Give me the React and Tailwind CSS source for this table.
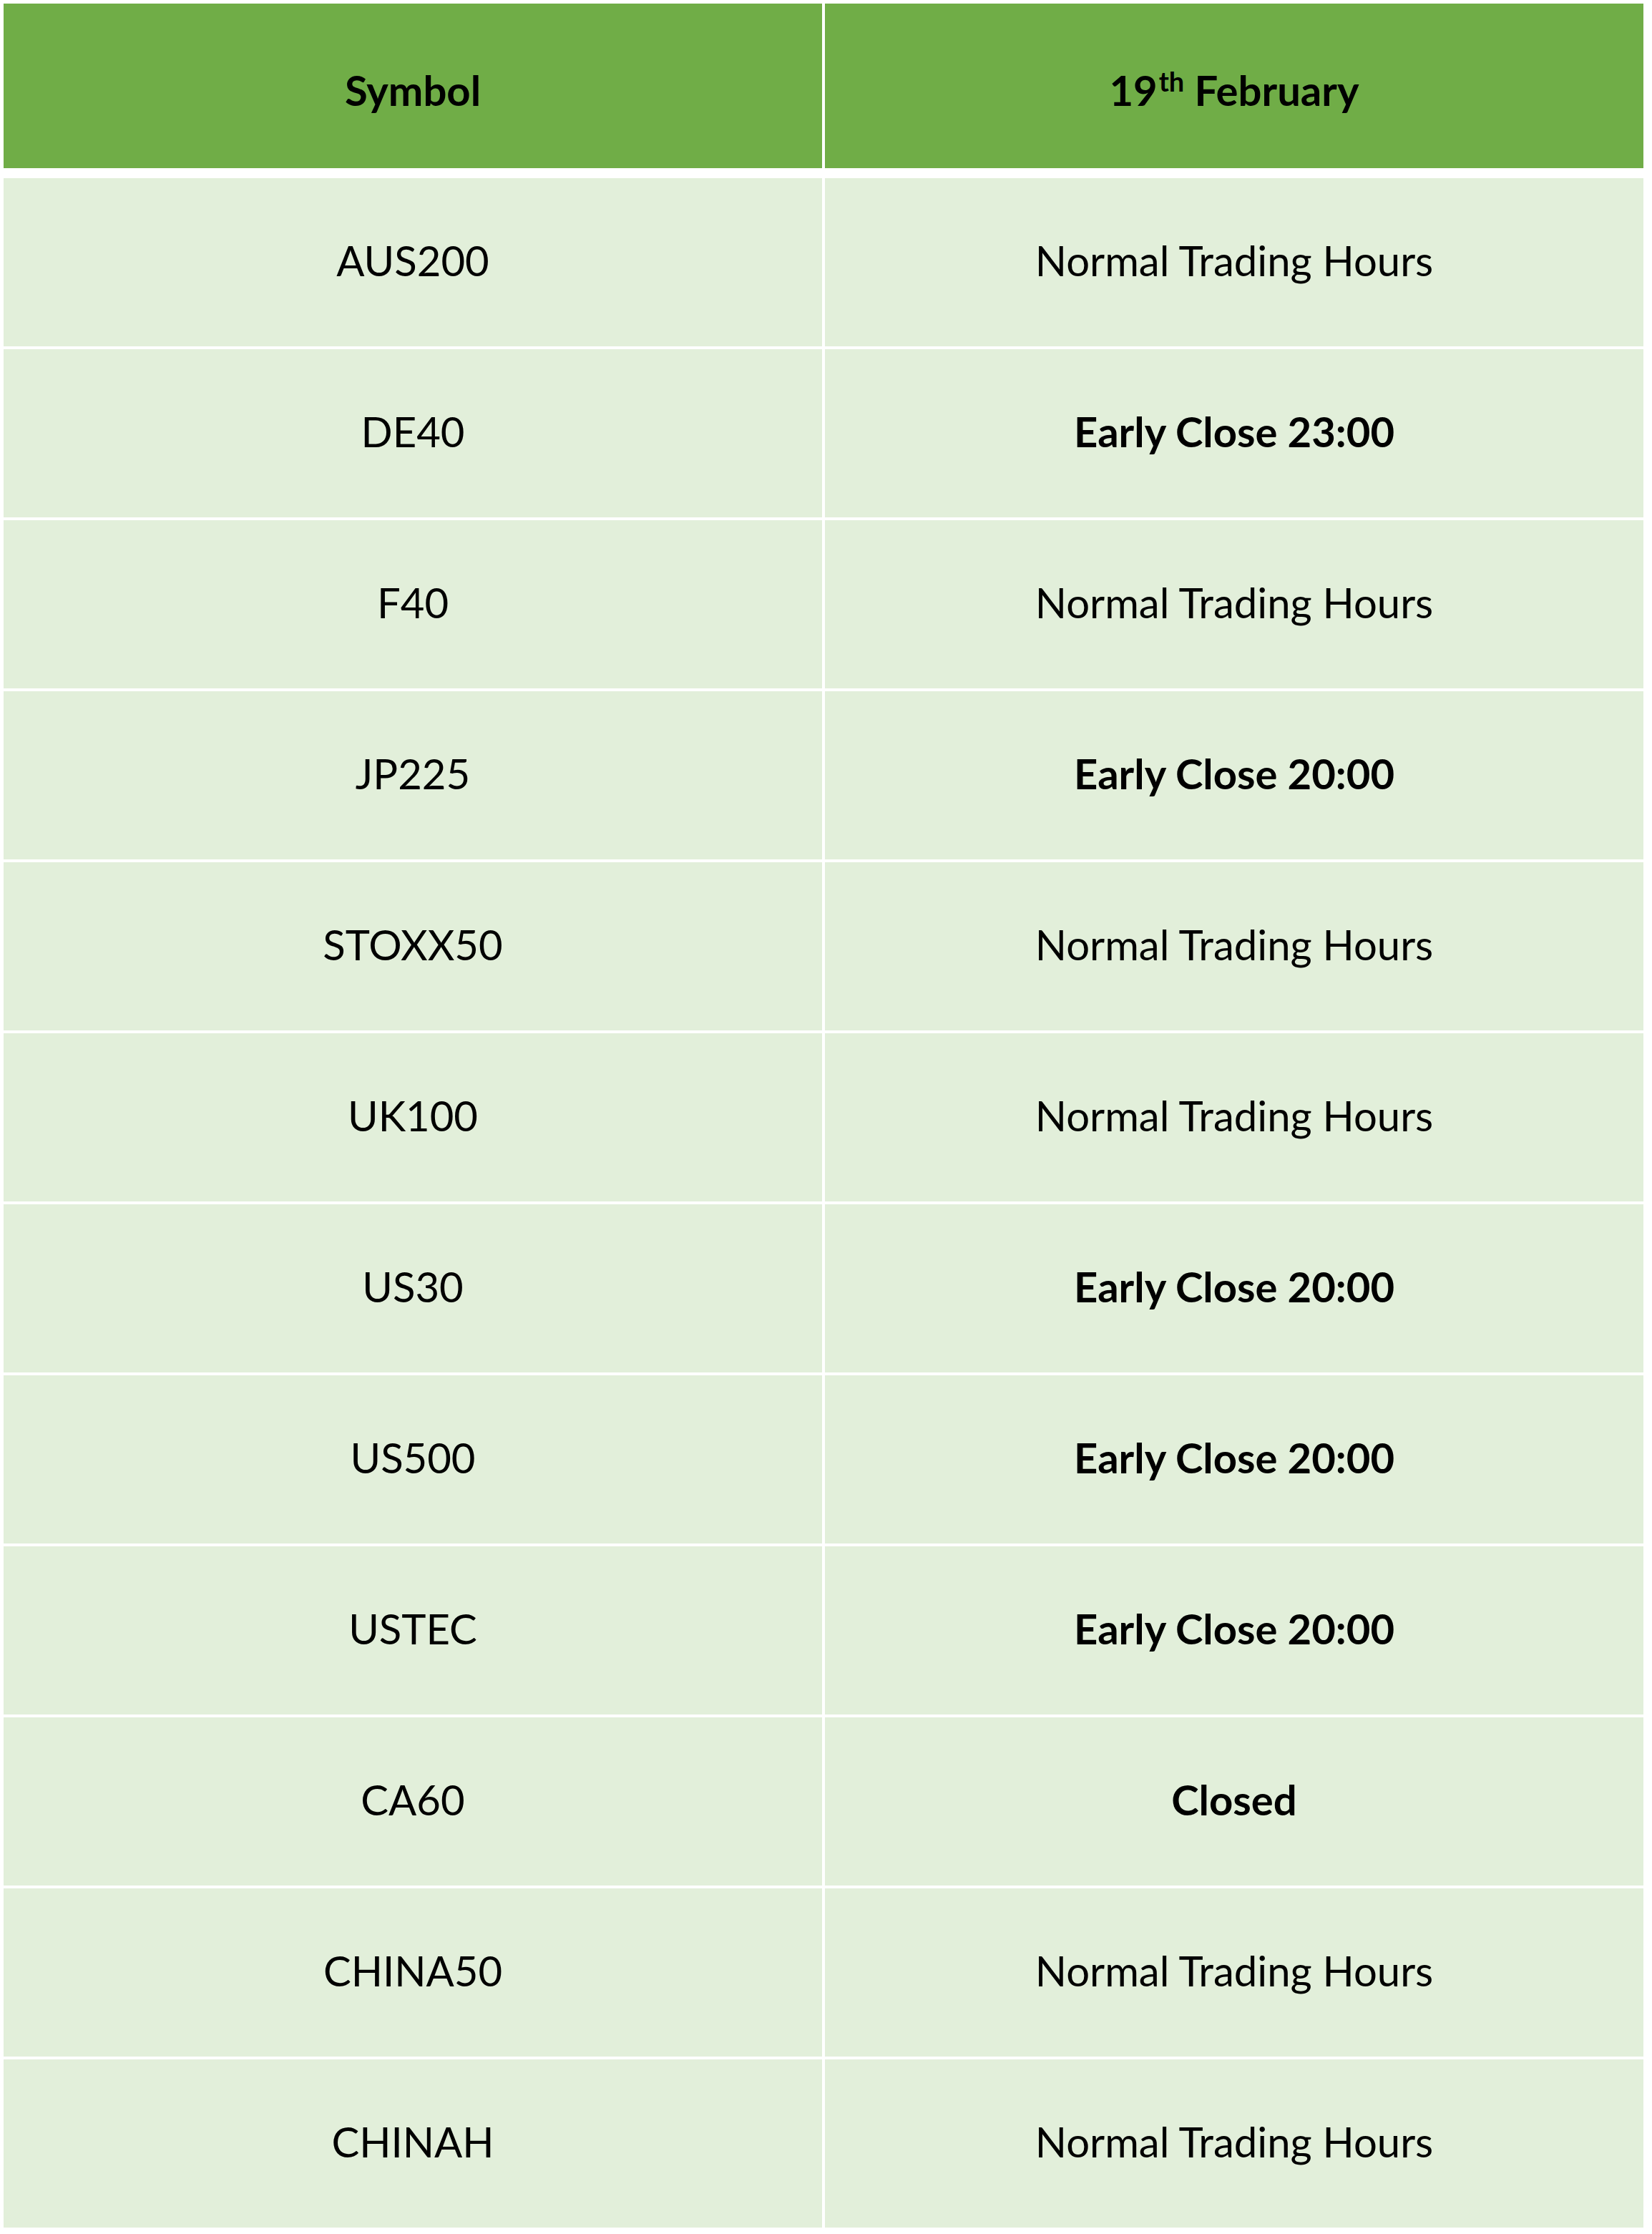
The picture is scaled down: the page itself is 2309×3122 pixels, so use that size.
import React from 'react';

const rows = [
  { symbol: 'AUS200', hours: 'Normal Trading Hours' },
  { symbol: 'DE40', hours: 'Early Close 23:00', bold: true },
  { symbol: 'F40', hours: 'Normal Trading Hours' },
  { symbol: 'JP225', hours: 'Early Close 20:00', bold: true },
  { symbol: 'STOXX50', hours: 'Normal Trading Hours' },
  { symbol: 'UK100', hours: 'Normal Trading Hours' },
  { symbol: 'US30', hours: 'Early Close 20:00', bold: true },
  { symbol: 'US500', hours: 'Early Close 20:00', bold: true },
  { symbol: 'USTEC', hours: 'Early Close 20:00', bold: true },
  { symbol: 'CA60', hours: 'Closed', bold: true },
  { symbol: 'CHINA50', hours: 'Normal Trading Hours' },
  { symbol: 'CHINAH', hours: 'Normal Trading Hours' },
];

const App = () => (
  <div className="w-[2309px] h-[3122px] bg-white pt-[5px] pl-[5px] font-['Lato',sans-serif] text-black text-[58px]">
    <div className="w-[2292px] flex flex-col">
      {/* Header */}
      <div className="grid grid-cols-2 gap-x-[4px] h-[230px] mb-[14px]">
        <div className="bg-[#70ad47] flex items-center justify-center pt-[10px] font-bold">Symbol</div>
        <div className="bg-[#70ad47] flex items-center justify-center pt-[10px] font-bold">
          <span>
            19<sup className="text-[38px] align-baseline relative top-[-20px] leading-none ml-[2px]">th</sup> February
          </span>
        </div>
      </div>

      {/* Rows */}
      <div className="flex flex-col gap-y-[4px]">
        {rows.map(({ symbol, hours, bold }) => (
          <div key={symbol} className="grid grid-cols-2 gap-x-[4px] h-[235px]">
            <div className="bg-[#e2efda] flex items-center justify-center pb-[6px]">{symbol}</div>
            <div className={`bg-[#e2efda] flex items-center justify-center pb-[6px] ${bold ? 'font-bold' : ''}`}>
              {hours}
            </div>
          </div>
        ))}
      </div>
    </div>
  </div>
);

export default App;
